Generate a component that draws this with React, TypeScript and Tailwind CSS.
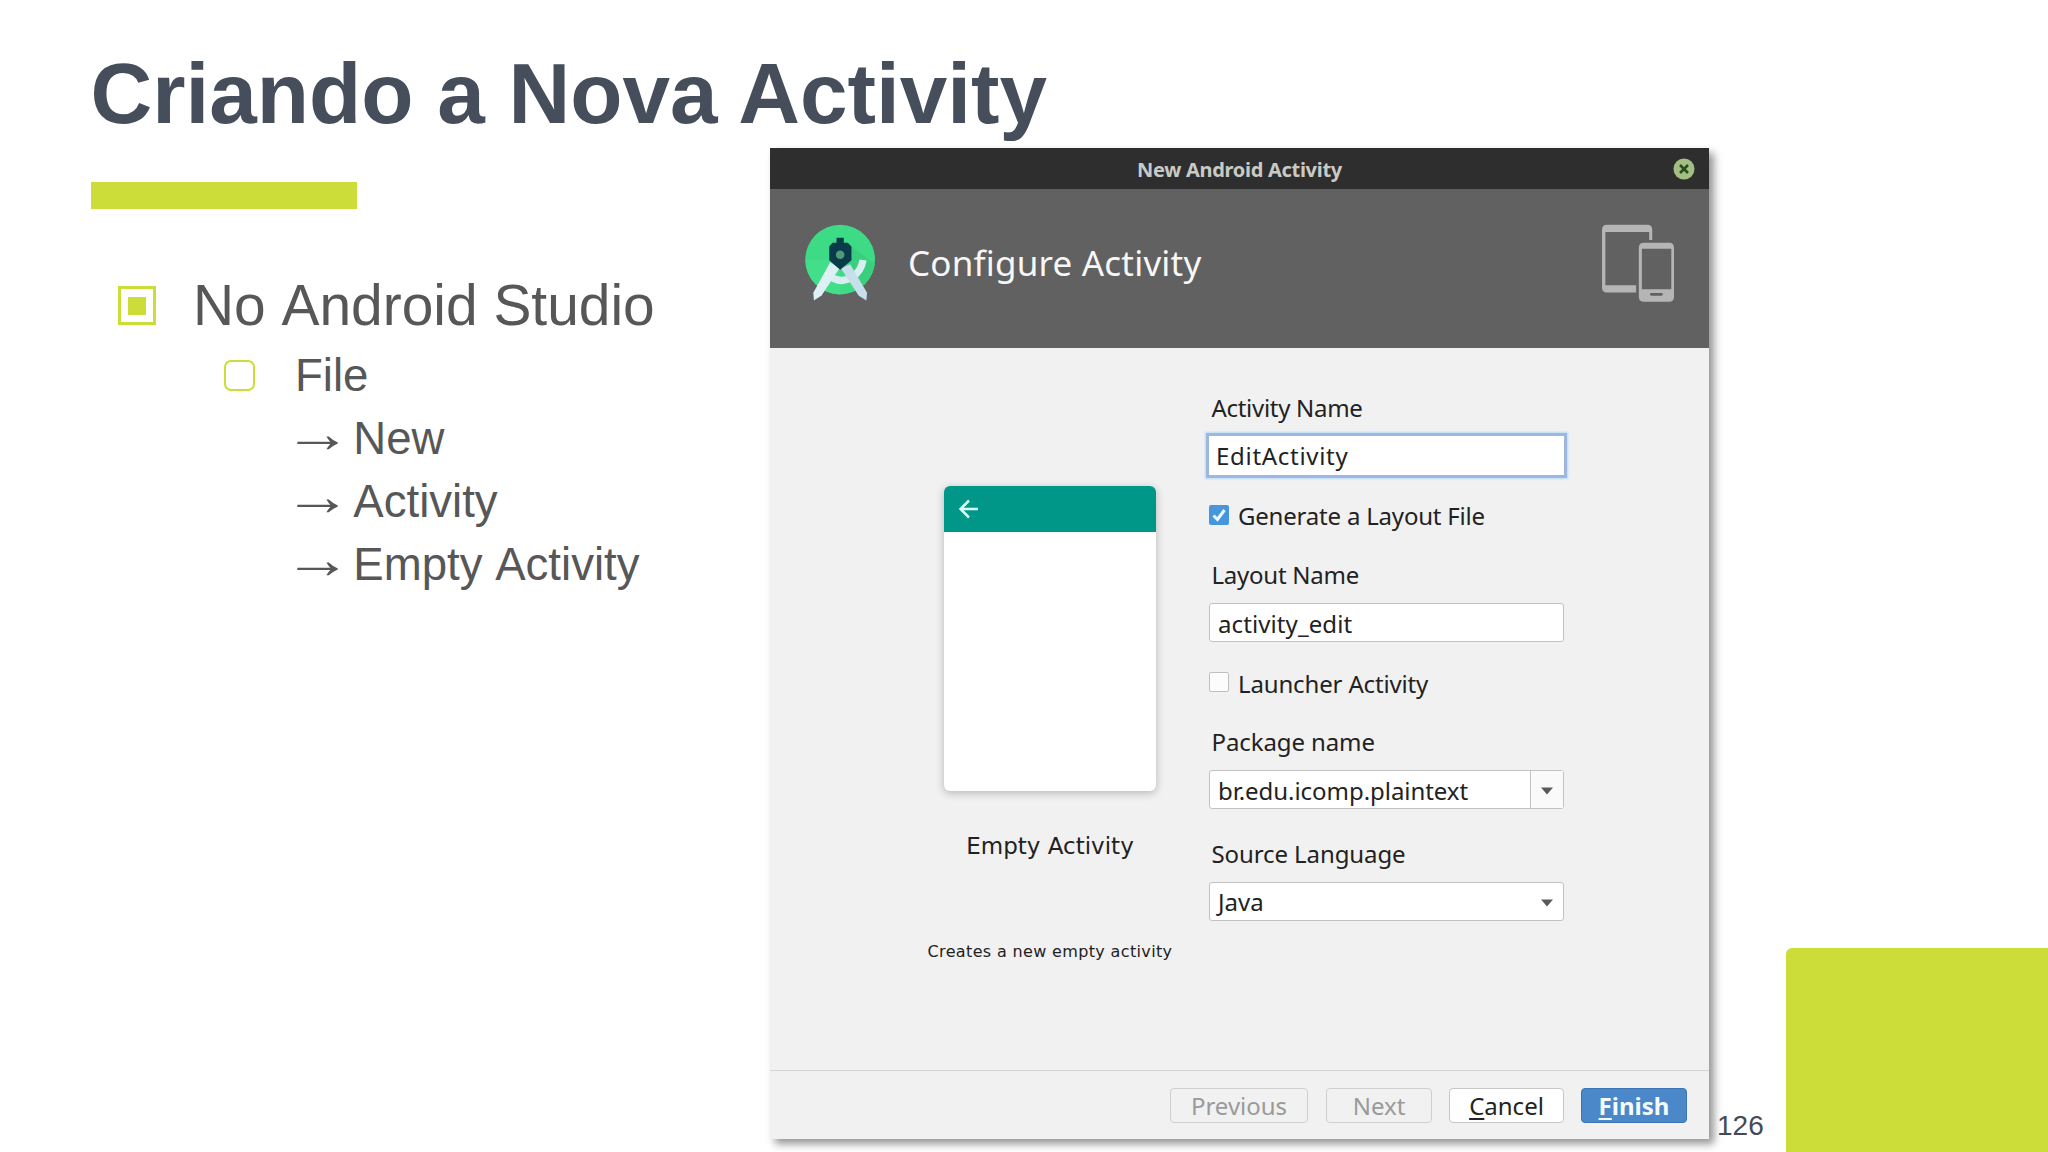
import { useState } from "react";
import clsx from "clsx";

const STEPS = ["New", "Activity", "Empty Activity"];

function StudioLogo() {
  return (
    <svg viewBox="130 245 220 240" className="h-20 w-[73px] shrink-0">
      <circle cx="242" cy="358" r="105" fill="#3ddb85" />
      <path d="M242 358H137A105 105 0 0 0 242 463Z" fill="#43de89" />
      <path d="M276 318L346 372A105 105 0 0 1 300 445L242 385Z" fill="#39cf7c" />
      <path
        d="M204 402Q240 434 277 411Q305 395 311 359"
        fill="none"
        stroke="#d9eef3"
        strokeWidth="22"
      />
      <path d="M212 366L240 384L186 466L163 481L161 458Z" fill="#dcf0f6" />
      <path d="M244 384L272 372L323 458L321 481L298 467Z" fill="#c6dfea" />
      <path
        d="M231 292H253V307H265L276 318V360L242 388L209 360V318L219 307H231Z"
        fill="#093b4b"
      />
      <circle cx="242" cy="343" r="13" fill="#4f9b78" />
    </svg>
  );
}

function DevicesIcon() {
  return (
    <svg viewBox="1050 245 230 245" className="h-[82px] w-[77px] shrink-0">
      <path
        fillRule="evenodd"
        fill="#b5b5b5"
        d="M1071 253H1191Q1206 253 1206 268V299H1197V275H1066V434H1158V456H1071Q1056 456 1056 441V268Q1056 253 1071 253Z"
      />
      <path
        fillRule="evenodd"
        fill="#b5b5b5"
        d="M1181 307H1257Q1271 307 1271 322V468Q1271 483 1257 483H1181Q1166 483 1166 468V322Q1166 307 1181 307ZM1175 325V446H1263V325ZM1204 457Q1199 457 1199 461T1204 465H1233Q1238 465 1238 461T1233 457Z"
      />
    </svg>
  );
}

function Caret() {
  return (
    <svg viewBox="0 0 14 8" className="h-2 w-3.5">
      <path d="M1 0.5H13L7 7.5Z" fill="#5a5a5a" />
    </svg>
  );
}

interface CheckRowProps {
  label: string;
  checked: boolean;
  onToggle: () => void;
  className?: string;
}

function CheckRow({ label, checked, onToggle, className }: CheckRowProps) {
  return (
    <div className="mt-[25px] flex h-8 cursor-pointer gap-[9px]" onClick={onToggle}>
      <span
        className={clsx(
          "mt-[5px] flex size-5 shrink-0 items-center justify-center rounded-[2px]",
          checked ? "bg-[#4596dd]" : "border border-[#c0c0c0] bg-[#fcfcfc]"
        )}
      >
        {checked && (
          <svg viewBox="0 0 20 20" className="size-5">
            <path d="M4.5 10.5L8.5 14.5L15.5 5" fill="none" stroke="#effaff" strokeWidth="3" />
          </svg>
        )}
      </span>
      <span className={clsx("leading-8 whitespace-nowrap", className)}>{label}</span>
    </div>
  );
}

const labelClass = "h-8 pt-px pl-[2.5px] leading-8 whitespace-nowrap";

const fieldClass =
  "mt-[13px] flex h-[39px] items-center rounded-[3px] border border-[#c2c2c2] bg-white pl-2 whitespace-nowrap";

const buttonClass = "h-[35px] rounded-[4px] border text-center leading-[34px]";

export default function App() {
  const [generateLayout, setGenerateLayout] = useState(true);
  const [launcher, setLauncher] = useState(false);

  return (
    <div className="flex h-[1152px] w-[2048px] flex-col overflow-hidden bg-white font-['Liberation_Sans',sans-serif]">
      <h1 className="h-[148px] shrink-0 pt-[45px] pl-[90.5px] text-[85.5px] leading-[98px] font-bold whitespace-nowrap text-[#464e5b]">
        Criando a Nova Activity
      </h1>

      <div className="flex min-h-0 flex-1">
        <div className="w-[770px] shrink-0 text-[#575757] [font-kerning:none]">
          <div className="mt-[34px] ml-[91px] h-[27px] w-[266px] bg-[#ccdd39]" />
          <div className="mt-[64px] flex h-16 items-center pl-[118px] text-[56.9px] leading-[64px]">
            <span className="mt-px flex h-[39px] w-[38px] items-center justify-center border-[3px] border-[#ccdd39]">
              <span className="h-[18px] w-[18px] bg-[#ccdd39]" />
            </span>
            <span className="ml-[37px] whitespace-nowrap">No Android Studio</span>
          </div>
          <div className="mt-[7px] flex pl-[224px] text-[45.6px] leading-[63px]">
            <span className="mt-4 h-[31px] w-[31px] rounded-[7px] border-[2.5px] border-[#ccdd39]" />
            <div className="ml-[40px] whitespace-nowrap">
              <div>File</div>
              {STEPS.map((step) => (
                <div key={step} className="h-[63px]">
                  <span className="inline-block -translate-y-[5.5px] scale-x-150 scale-y-120 leading-5">
                    →
                  </span>{" "}
                  {step}
                </div>
              ))}
            </div>
          </div>
        </div>

        <div className="flex h-[991px] w-[939px] shrink-0 flex-col bg-[#f1f1f1] font-['Noto_Sans',sans-serif] shadow-[5px_5px_8px_rgba(0,0,0,0.42)]">
          <div className="flex h-[41px] shrink-0 items-center bg-[#2e2e2e] pr-[14px]">
            <span className="flex-1 pt-0.5 pl-[36px] text-center text-[20px] tracking-[-0.3px] font-bold text-[#cacac4]">
              New Android Activity
            </span>
            <svg viewBox="0 0 22 22" className="size-[22px]">
              <circle cx="11" cy="11" r="10.5" fill="#a1bf83" />
              <path d="M7 7L15 15M15 7L7 15" stroke="#2c4a1c" strokeWidth="2.6" />
            </svg>
          </div>

          <div className="flex h-[159px] shrink-0 items-start bg-[#616161] pr-[32px] pl-[33px]">
            <div className="mt-[33px]">
              <StudioLogo />
            </div>
            <div className="mt-[50px] ml-[32px] flex-1 text-[35px] leading-[48px] tracking-[0.2px] text-[#f7f7f7]">
              Configure Activity
            </div>
            <div className="mt-[32.5px]">
              <DevicesIcon />
            </div>
          </div>

          <div className="flex min-h-0 flex-1 text-[24px] text-[#222]">
            <div className="ml-[130px] flex w-[300px] flex-col items-center pt-[138px] font-['DejaVu_Sans',sans-serif]">
              <div className="h-[305px] w-[212px] overflow-hidden rounded-[6px] bg-white shadow-[0_2px_9px_rgba(0,0,0,0.25)]">
                <div className="flex h-[46px] items-center bg-[#009688] pl-[15px]">
                  <svg viewBox="0 0 20 20" className="size-5">
                    <path
                      d="M19 10H2M10 1.5L1.5 10L10 18.5"
                      fill="none"
                      stroke="#d5fff8"
                      strokeWidth="2.5"
                    />
                  </svg>
                </div>
              </div>
              <div className="mt-[40px] text-[23px] leading-[30px] whitespace-nowrap">
                Empty Activity
              </div>
              <div className="mt-[81px] text-[16px] leading-5 tracking-[0.35px] whitespace-nowrap">
                Creates a new empty activity
              </div>
            </div>

            <div className="ml-[9px] w-[355px] pt-[43px]">
              <div className={clsx(labelClass, "tracking-[-0.3px]")}>Activity Name</div>
              <div className="mt-[13px] flex h-[39px] items-center bg-white pt-px pl-[7px] tracking-[0.7px] shadow-[0_0_0_3px_#9db6e2,0_0_2px_4px_#b5dcf8]">
                EditActivity
              </div>
              <CheckRow
                label="Generate a Layout File"
                checked={generateLayout}
                onToggle={() => setGenerateLayout(!generateLayout)}
                className="tracking-[-0.2px]"
              />
              <div className={clsx(labelClass, "mt-[26px] tracking-[-0.25px]")}>Layout Name</div>
              <div className={clsx(fieldClass, "pt-[3px] tracking-[0.1px]")}>activity_edit</div>
              <CheckRow
                label="Launcher Activity"
                checked={launcher}
                onToggle={() => setLauncher(!launcher)}
                className="pt-px tracking-[-0.15px]"
              />
              <div className={clsx(labelClass, "mt-[26px] tracking-[-0.1px]")}>Package name</div>
              <div className={fieldClass}>
                <span className="flex-1 pt-0.5 tracking-[-0.05px]">br.edu.icomp.plaintext</span>
                <span className="flex h-full w-[33px] items-center justify-center border-l border-[#c2c2c2] bg-[#fafafa] pt-0.5">
                  <Caret />
                </span>
              </div>
              <div className={clsx(labelClass, "mt-[28px] tracking-[-0.1px]")}>
                Source Language
              </div>
              <div className={fieldClass}>
                <span className="flex-1 pt-px">Java</span>
                <span className="flex w-[33px] justify-center pt-0.5">
                  <Caret />
                </span>
              </div>
            </div>
          </div>

          <div className="flex h-[69px] shrink-0 border-t border-[#d4d4d4] pt-[17px] pr-[22px] text-[24px]">
            <button className={clsx(buttonClass, "ml-auto w-[138px] border-[#cfcfcf] text-[#9a9a9a]")}>
              Previous
            </button>
            <button className={clsx(buttonClass, "ml-[18px] w-[106px] border-[#cfcfcf] text-[#9a9a9a]")}>
              Next
            </button>
            <button className={clsx(buttonClass, "ml-[17px] w-[115px] border-[#c6c6c6] bg-white text-[#222]")}>
              <span className="underline decoration-2 underline-offset-3">C</span>ancel
            </button>
            <button
              className={clsx(
                buttonClass,
                "ml-[17px] w-[106px] border-[#3c75b4] bg-[#4a88c9] font-bold text-[#f4fbff]"
              )}
            >
              <span className="underline decoration-2 underline-offset-3">F</span>inish
            </button>
          </div>
        </div>

        <div className="flex flex-1 items-end">
          <span className="w-[77px] shrink-0 pb-2.5 pl-2 text-[28px] leading-8 text-[#454a55]">
            126
          </span>
          <div className="h-[204px] flex-1 rounded-tl-[6px] bg-[#ccdd39]" />
        </div>
      </div>
    </div>
  );
}
